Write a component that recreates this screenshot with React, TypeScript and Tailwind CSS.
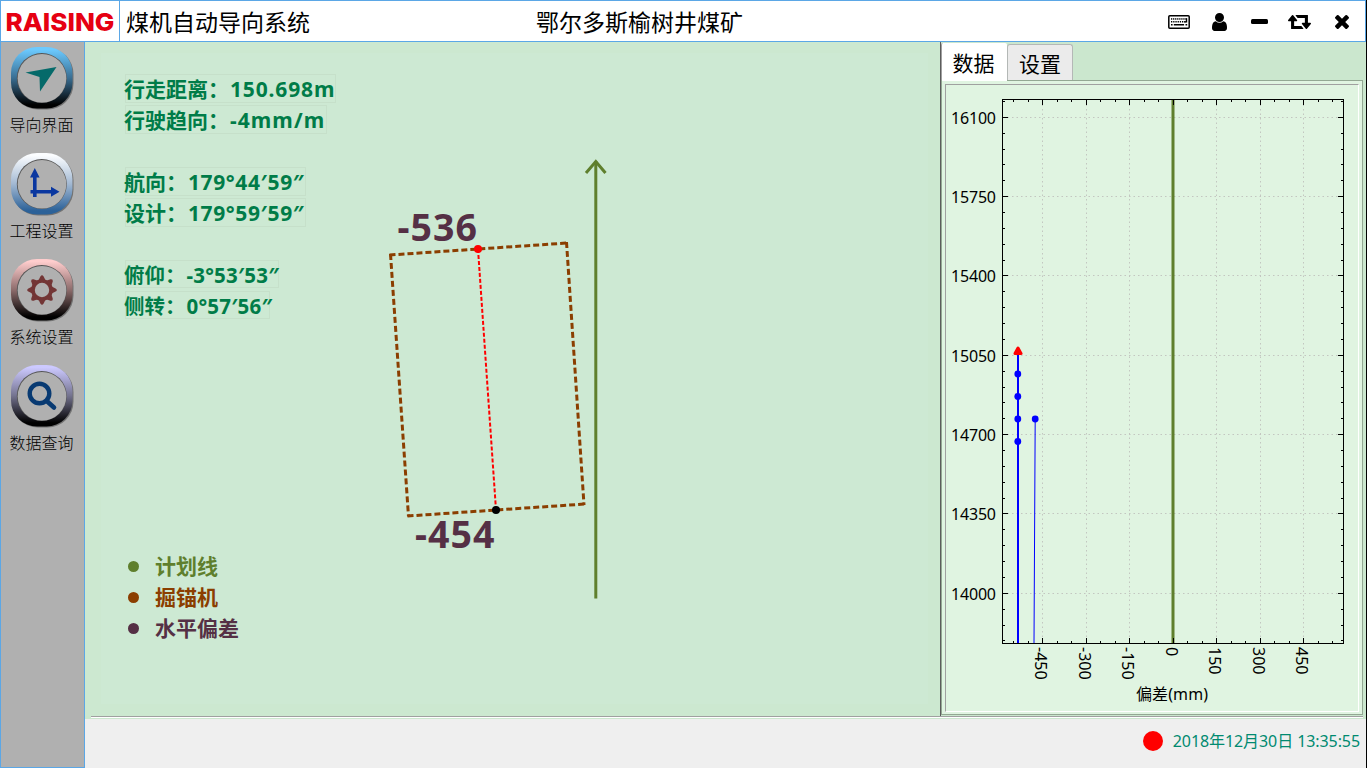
import React from "react";

const FONT = "font-['Noto_Sans','Noto_Sans_CJK_SC',sans-serif]";

type NavItem = { label: string; id: string; from: string; mid: string; to: string; icon: React.ReactNode };

const navItems: NavItem[] = [
  {
    label: "导向界面",
    id: "guide",
    from: "#6ccaff",
    mid: "#3a6f94",
    to: "#000000",
    icon: <path d="M14.5 26.5 45.5 21 29 45.5 28.5 31Z" fill="#056a6a" />,
  },
  {
    label: "工程设置",
    id: "project",
    from: "#fbfdff",
    mid: "#a3b9d3",
    to: "#2b6198",
    icon: (
      <g fill="#0a37a0">
        <path d="M22 20.5h3.6V45H22zM19 25.5 23.8 16l4.8 9.5z" />
        <path d="M19.5 38H42v3.6H19.5zM40 34.8 48.5 39.8 40 44.8z" />
      </g>
    ),
  },
  {
    label: "系统设置",
    id: "system",
    from: "#ffcdcd",
    mid: "#8d6c6c",
    to: "#000000",
    icon: (
      <g stroke="#733636" fill="none">
        <circle cx="31" cy="32" r="9" strokeWidth="3.6" />
        <g fill="#733636" stroke="none">
          {[0, 45, 90, 135, 180, 225, 270, 315].map((a) => (
            <path key={a} d="M27 23.2 29.4 18.4Q31 16 32.6 18.4L35 23.2z" transform={`rotate(${a} 31 32)`} />
          ))}
        </g>
      </g>
    ),
  },
  {
    label: "数据查询",
    id: "query",
    from: "#ccc9ff",
    mid: "#74738f",
    to: "#000000",
    icon: (
      <g stroke="#083a72" fill="none">
        <circle cx="28.5" cy="29.5" r="9.8" strokeWidth="4.4" />
        <path d="M36 37.2 43 43.5" strokeWidth="4.6" strokeLinecap="round" />
      </g>
    ),
  },
];

function NavButton({ item }: { item: NavItem }) {
  return (
    <button className="flex h-[106px] w-full flex-col items-center pr-[2px]">
      <svg width="66" height="66" viewBox="-2 0 66 66" className="shrink-0">
        <defs>
          <linearGradient id={item.id} x1="0" y1="0" x2="0" y2="1">
            <stop offset="0.04" stopColor={item.from} />
            <stop offset="0.5" stopColor={item.mid} />
            <stop offset="0.94" stopColor={item.to} />
          </linearGradient>
        </defs>
        <rect x="1" y="2" width="61.5" height="61.5" rx="26" fill="#000" opacity="0.35" />
        <rect x="0" y="1" width="61.5" height="61.5" rx="26" fill={`url(#${item.id})`} />
        <circle cx="30.8" cy="32" r="25" fill="#555" />
        <circle cx="31" cy="32.3" r="24.3" fill="#b0b0b0" />
        {item.icon}
      </svg>
      <span className="mt-px text-[16px] leading-6 font-light text-black">{item.label}</span>
    </button>
  );
}

function KeyboardIcon() {
  const dots: [number, number][] = [];
  for (let i = 0; i < 8; i++) dots.push([3 + i * 2.05, 3.2]);
  for (let i = 0; i < 7; i++) dots.push([3 + i * 2.2, 6]);
  return (
    <svg width="22" height="14" viewBox="0 0 22 14">
      <rect x="0.8" y="0.8" width="20.4" height="12.4" rx="1" fill="none" stroke="#000" strokeWidth="1.5" />
      {dots.map(([x, y], i) => (
        <rect key={i} x={x} y={y} width="1.3" height="1.5" />
      ))}
      <path d="M17.8 3.2h1.4v4.3h-2.8V6.2h1.4zM3 9h1.6v1.6H3zM5.8 9h10.3v1.6H5.8zM17.5 9h1.7v1.6h-1.7z" />
    </svg>
  );
}

function Header() {
  return (
    <header className="flex h-[42px] shrink-0 items-stretch border border-[#5ba7e6] bg-white">
      <div className="flex w-[119px] shrink-0 items-center border-r border-[#5ba7e6]">
        <svg width="118" height="40" viewBox="1 1 118 40">
          <text
            x="5.5"
            y="30.5"
            textLength="109"
            lengthAdjust="spacingAndGlyphs"
            className="fill-[#e60012] font-['Inter',sans-serif] text-[24.5px] font-extrabold"
          >
            RAISING
          </text>
        </svg>
      </div>
      <h1 className="w-[416px] shrink-0 pl-[6px] text-[23px] leading-[42px] text-black">煤机自动导向系统</h1>
      <div className="flex-1 text-[23px] leading-[42px] text-black">鄂尔多斯榆树井煤矿</div>
      <div className="flex items-center pt-px pr-[16px]">
        <KeyboardIcon />
        <svg className="ml-[22px]" width="15" height="18" viewBox="0 128 1280 1536">
          <path d="M1280 1399q0 109-62.5 187t-150.5 78h-854q-88 0-150.5-78t-62.5-187q0-85 8.500-160.500t31.500-152 58.500-131 94-89 134.500-34.500q131 128 313 128t313-128q76 0 134.500 34.500t94 89 58.500 131 31.500 152 8.500 160.500zm-256-887q0 159-112.500 271.500t-271.500 112.500-271.500-112.500-112.500-271.500 112.500-271.500 271.500-112.500 271.500 112.500 112.500 271.500z" />
        </svg>
        <div className="-mt-px ml-[24px] h-[5px] w-[17px] rounded-[1.500px] bg-black" />
        <svg className="ml-[20.500px]" width="23" height="14" viewBox="0 384 1920 1152" preserveAspectRatio="none">
          <path d="M1280 1504q0 13-9.500 22.500t-22.500 9.500h-960q-8 0-13.500-2t-9-7-5.500-8-3-11.500-1-11.500v-600h-192q-26 0-45-19t-19-45q0-24 15-41l320-384q19-22 49-22t49 22l320 384q15 17 15 41 0 26-19 45t-45 19h-192v384h576q16 0 25 11l160 192q7 10 7 21zm640-416q0 24-15 41l-320 384q-20 23-49 23t-49-23l-320-384q-15-17-15-41 0-26 19-45t45-19h192v-384h-576q-16 0-25-12l-160-192q-7-9-7-20 0-13 9.500-22.500t22.500-9.500h960q8 0 13.500 2t9 7 5.500 8 3 11.500 1 11.500v600h192q26 0 45 19t19 45z" />
        </svg>
        <svg className="ml-[24px]" width="14" height="14" viewBox="110 366 1188 1188">
          <path d="M1298 1322q0 40-28 68l-136 136q-28 28-68 28t-68-28l-294-294-294 294q-28 28-68 28t-68-28l-136-136q-28-28-28-68t28-68l294-294-294-294q-28-28-28-68t28-68l136-136q28-28 68-28t68 28l294 294 294-294q28-28 68-28t68 28l136 136q28 28 28 68t-28 68l-294 294 294 294q28 28 28 68z" />
        </svg>
      </div>
    </header>
  );
}

function Readout({ label, value, box, text }: { label: string; value: string; box: string; text: string }) {
  return (
    <div className={`flex items-center border border-[#c6e0ca] pt-[2px] font-bold whitespace-nowrap text-[#007c48] ${box}`}>
      <span className="-ml-[2px]">{label}：</span>
      <span className={`ml-px ${text}`}>{value}</span>
    </div>
  );
}

function Legend({ dot, text, label }: { dot: string; text: string; label: string }) {
  return (
    <div className="flex h-[31px] items-center">
      <span className={`mr-[16px] h-[11px] w-[11px] rounded-full ${dot}`} />
      <span className={`text-[21px] leading-[31px] font-bold ${text}`}>{label}</span>
    </div>
  );
}

function GuideCanvas() {
  return (
    <section className="relative flex min-w-0 flex-1 flex-col bg-[#cce8d0] pt-[11px] pr-[12px] pb-[12px] pl-[16px]">
      <div className="flex flex-1 flex-col bg-[#cde9d3] pt-[21px] pl-[24px]">
        <Readout label="行走距离" value="150.698m" box="h-[29px] w-[211px] text-[21px]" text="tracking-[0.85px]" />
        <Readout label="行驶趋向" value="-4mm/m" box="mt-[2px] h-[29px] w-[202px] text-[21px]" text="tracking-[1.05px]" />
        <Readout label="航向" value="179°44′59″" box="mt-[33px] h-[29px] w-[181px] text-[21px]" text="tracking-[0.6px]" />
        <Readout label="设计" value="179°59′59″" box="mt-[2px] h-[29px] w-[181px] text-[21px]" text="tracking-[0.6px]" />
        <Readout label="俯仰" value="-3°53′53″" box="mt-[33px] h-[28px] w-[154px] text-[20.500px]" text="tracking-[0.2px]" />
        <Readout label="侧转" value="0°57′56″" box="mt-[3px] h-[28px] w-[145px] text-[20.500px]" text="tracking-[0.2px]" />
        <div className="mt-[232px] pl-[3px]">
          <Legend dot="bg-[#5f7f2d]" text="text-[#5f7f2d]" label="计划线" />
          <Legend dot="bg-[#8b3e00]" text="text-[#8b3e00]" label="掘锚机" />
          <Legend dot="bg-[#553045]" text="text-[#553045]" label="水平偏差" />
        </div>
      </div>
      <svg className="pointer-events-none absolute inset-0" width="855" height="674" viewBox="85 42 855 674">
        <g stroke="#5f7f2d" strokeWidth="3" fill="none">
          <path d="M595.8 161V598.500" />
          <path d="M586 173 595.800 161.500 605.500 173" />
        </g>
        <g stroke="#8b3e00" strokeWidth="3" strokeDasharray="6 3">
          <path d="M389.500 255 567 243" />
          <path d="M390.500 254 408.500 516.500" />
          <path d="M566.500 242 584 505" />
          <path d="M407.500 516 585 504" />
        </g>
        <path d="M478 249 496 510" stroke="#f00" strokeWidth="2" strokeDasharray="4 2" />
        <circle cx="478" cy="249" r="4" fill="#f00" />
        <circle cx="496" cy="510" r="4" fill="#000" />
        <g className="fill-[#553045] text-[37.500px] font-bold">
          <text x="397.500" y="240.500" textLength="79.500">-536</text>
          <text x="415" y="547.500" textLength="79.500">-454</text>
        </g>
      </svg>
    </section>
  );
}

const xTicks = [-450, -300, -150, 0, 150, 300, 450];
const yTicks = [16100, 15750, 15400, 15050, 14700, 14350, 14000];
const px = (v: number) => Math.round(1172.600 + v * 0.29) - 0.5;
const py = (v: number) => Math.floor(117.300 + (16100 - v) * 0.22667) + 0.5;
const range = (start: number, end: number, step: number) => {
  const out: number[] = [];
  for (let v = start; v <= end; v += step) out.push(v);
  return out;
};

function DeviationChart() {
  return (
    <svg width="412" height="626" viewBox="946 85 412 626" className="text-[16px]">
      <g stroke="#c3c6c0" strokeDasharray="1.500 3">
        {xTicks.map((v) => (
          <path key={v} d={`M${px(v) + 1} 100V643`} />
        ))}
        {yTicks.map((v) => (
          <path key={v} d={`M1003 ${py(v)}H1343`} />
        ))}
      </g>
      <path d="M1173 99V643" stroke="#5f7f2d" strokeWidth="3" />
      <path d="M1018 352V643" stroke="#00f" strokeWidth="2" />
      <path d="M1035.200 419 1034 643" stroke="#00f" strokeWidth="1" />
      {[374, 396.500, 419, 441.500].map((y) => (
        <circle key={y} cx="1017.800" cy={y} r="3.400" fill="#00f" />
      ))}
      <circle cx="1035.200" cy="419" r="3.400" fill="#00f" />
      <path d="M1018 348 1021 353.500H1015Z" fill="#f00" stroke="#f00" strokeWidth="3" strokeLinejoin="round" />
      <g stroke="#000" fill="none">
        <rect x="1002.500" y="99.500" width="341" height="544" />
        {range(-550, 550, 50).map((v) => {
          const len = v % 150 === 0 ? 5 : 2;
          return <path key={v} d={`M${px(v) + 1} 100v${len}M${px(v) + 1} 643v${-len}`} />;
        })}
        {range(13790, 16170, 70).map((v) => {
          const len = v % 350 === 0 ? 5 : 2;
          return <path key={v} d={`M1003 ${py(v)}h${len}M1343 ${py(v)}h${-len}`} />;
        })}
      </g>
      {yTicks.map((v) => (
        <text key={v} x="996" y={py(v) + 6} textAnchor="end" textLength="45">
          {v}
        </text>
      ))}
      {xTicks.map((v) => (
        <text key={v} transform={`translate(${px(v) - 6.500} 647) rotate(90)`}>
          {v}
        </text>
      ))}
      <text x="1172" y="700" textAnchor="middle" textLength="72">
        偏差(mm)
      </text>
    </svg>
  );
}

function SidePanel() {
  return (
    <aside className="flex w-[426px] shrink-0 flex-col border-l border-[#5c5c5c] bg-[#cbe7ce]">
      <div className="flex h-[38px] shrink-0 items-end">
        <div className="h-[37px] w-[66px] rounded-t-[2px] border-l border-[#a0a0a0] bg-white pr-[2px] text-center text-[21px] leading-[41px] text-black">
          数据
        </div>
        <div className="h-[36px] w-[66px] rounded-t-[3px] border border-b-0 border-[#b4b8b6] bg-[#ebebeb] text-center text-[21px] leading-[39px] text-black">
          设置
        </div>
      </div>
      <div className="mr-[3px] flex h-[635px] flex-col border border-t-0 border-[#93a893] bg-[#e0f4e1] pr-[3px] pb-[2px] pl-[3px]">
        <div className="-mx-[3px] flex h-[4px]">
          <div className="h-px w-[65px] shrink-0 bg-white" />
          <div className="flex-1 border-t border-[#93a893]" />
        </div>
        <div className="flex-1 border border-t-[#a0a0a0] border-r-white border-b-white border-l-[#a0a0a0] bg-[#e0f4e1]">
          <DeviationChart />
        </div>
      </div>
    </aside>
  );
}

export default function App() {
  return (
    <div className={`flex h-[768px] w-[1367px] overflow-hidden border-r border-black ${FONT}`}>
      <div className="flex min-w-0 flex-1 flex-col">
        <Header />
        <div className="flex min-h-0 flex-1">
          <nav className="flex w-[85px] shrink-0 flex-col border border-t-0 border-[#5ba7e6] bg-[#b0b0b0] pt-[4px]">
            {navItems.map((item) => (
              <NavButton key={item.id} item={item} />
            ))}
          </nav>
          <div className="flex min-w-0 flex-1 flex-col">
            <div className="flex h-[674px] shrink-0">
              <GuideCanvas />
              <SidePanel />
            </div>
            <div className="h-[3px] shrink-0 bg-[#cbe8ce] pr-[3px] pl-[6px]">
              <div className="h-[2px] border-t border-[#a0a0a0] bg-white" />
            </div>
            <footer className="flex flex-1 items-center justify-end bg-[#efefef] pr-[6px] pb-[5px]">
              <span className="mr-[10px] h-[20px] w-[20px] rounded-full bg-[#f00]" />
              <span className="text-[16px] tracking-[-0.08px] text-[#008a70]">2018年12月30日 13:35:55</span>
            </footer>
          </div>
        </div>
      </div>
    </div>
  );
}
